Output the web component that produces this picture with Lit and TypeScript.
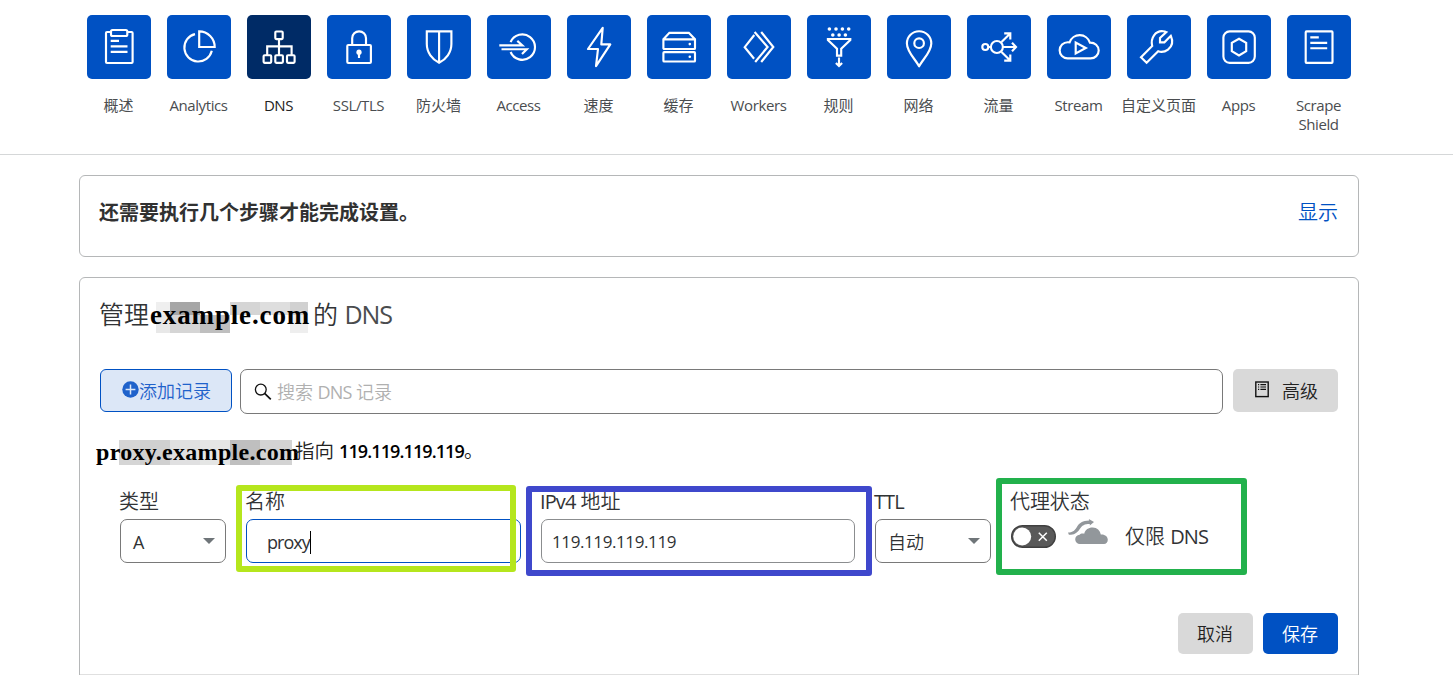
import { LitElement, html, css, svg } from "lit";
import { customElement } from "lit/decorators.js";
import { classMap } from "lit/directives/class-map.js";

const glyphs: Record<string, unknown> = {
  overview: svg`<rect x="19" y="17" width="26.6" height="31" rx="1"/><rect class="knock" x="24" y="15" width="16.3" height="6" rx="1.5"/><path d="M23.7 25.8H32M23.7 31.3H40.5M23.7 36.8H40.5"/>`,
  analytics: svg`<path d="M28 19.1A13.9 13.9 0 1 0 44.8 35.8"/><path d="M32.2 16.4V32H47.7A15.6 15.6 0 0 0 32.2 16.4Z"/>`,
  dns: svg`<rect x="28.3" y="16.5" width="7.4" height="7.6" rx="1"/><path d="M32 24.3V40M20.2 40V31.3H44.6V40"/><rect x="16.6" y="40.2" width="7.6" height="7.6" rx="1"/><rect x="28.3" y="40.2" width="7.6" height="7.6" rx="1"/><rect x="40" y="40.2" width="7.6" height="7.6" rx="1"/>`,
  ssl: svg`<rect x="20.3" y="30" width="23.6" height="18" rx="1"/><path d="M25.2 30V23.2a6.9 6.9 0 0 1 13.8 0V30"/><circle class="solid" cx="32" cy="37.2" r="2.6"/><path d="M32 38V43"/>`,
  firewall: svg`<path d="M19.8 16.4H44.4V29C44.4 37.5 39 44.5 32.1 47.7C25.2 44.5 19.8 37.5 19.8 29ZM32.1 16.4V47"/>`,
  access: svg`<path d="M23.6 27.2A12.7 12.7 0 1 1 23.6 37"/><path d="M12.3 30.3H35.3L30.3 25.9M14.5 34.2H39.8L35 39"/>`,
  speed: svg`<path d="M35.7 12.8L21 34H31L29 51.2L43.3 29.4H34.3Z" stroke-linejoin="round"/>`,
  cache: svg`<path d="M16.4 24.2L22.4 17.8H41.8L48 24.2V33.2a.8 .8 0 0 1-.8 .8H17.2a.8 .8 0 0 1-.8-.8ZM16.4 24.4H48"/><rect x="16.4" y="37.1" width="31.6" height="9.4" rx=".8"/><circle class="solid" cx="42.8" cy="29.1" r="1.3"/><circle class="solid" cx="42.8" cy="41.7" r="1.3"/>`,
  workers: svg`<path d="M27.3 20L17.7 32.2L27.1 43.8M27.6 17L40.6 32L28.2 47M34.2 17L46.3 32L34.2 47"/>`,
  rules: svg`<g class="solid"><circle cx="22.4" cy="14" r="1.8"/><circle cx="29" cy="14" r="1.8"/><circle cx="35.4" cy="14" r="1.8"/><circle cx="41.7" cy="14" r="1.8"/><circle cx="25.8" cy="20" r="1.8"/><circle cx="32.1" cy="20" r="1.8"/><circle cx="38.4" cy="20" r="1.8"/></g><path d="M20.9 24H43.3V25L34.2 33.8V40.6H30V33.8L20.9 25ZM32 42.6V50.8M28.9 48L32 51L35.1 48"/>`,
  network: svg`<path d="M32.1 51.3C29 45 19.9 37 19.9 28.4A12.2 12.2 0 0 1 44.3 28.4C44.3 37 35.2 45 32.1 51.3Z" stroke-linejoin="round"/><circle cx="32.1" cy="28.2" r="4.8"/>`,
  traffic: svg`<circle cx="18.3" cy="32" r="3"/><circle cx="29.9" cy="32" r="6"/><path d="M21.3 32H24M34.5 27L43.2 18.4M37.2 18.4H43.3V24.6M36 32H48.5M45 27.8L49 32L45 36.2M34.5 37L43.2 45.6M37.2 45.6H43.3V39.4"/>`,
  stream: svg`<path d="M20.6 43.4A8 8 0 0 1 20.8 27.3H22.6A10.7 10.7 0 0 1 42.9 27.6C47.8 27.4 51.7 31 51.7 35.6C51.7 40 48 43.4 43.6 43.4Z"/><path d="M28.7 27.6V38.5L38.8 33Z"/>`,
  custom: svg`<path d="M14 42.3L25.2 31C23.2 23 28.5 15.5 36 16.2C37.4 16.3 38.6 16.7 39.4 17.1L33 23V27.3H37.4L43.8 20.8C46.3 26.5 45 31.6 41 34.6C38 36.8 34 37.3 31.2 36.3L19.6 47.8Z"/>`,
  apps: svg`<rect x="16.4" y="16.4" width="31.4" height="31.4" rx="6.2"/><path d="M32 23.7L39.2 27.8V36.2L32 40.4L24.8 36.2V27.8Z"/>`,
  scrape: svg`<rect x="18.7" y="16.4" width="26.8" height="31.4" rx=".8"/><path d="M23.3 22.4H31.8M23.3 27.8H40.2M23.3 33.2H40.2"/>`,
};

const sections: [string, string][] = [
  ["overview", "概述"],
  ["analytics", "Analytics"],
  ["dns", "DNS"],
  ["ssl", "SSL/TLS"],
  ["firewall", "防火墙"],
  ["access", "Access"],
  ["speed", "速度"],
  ["cache", "缓存"],
  ["workers", "Workers"],
  ["rules", "规则"],
  ["network", "网络"],
  ["traffic", "流量"],
  ["stream", "Stream"],
  ["custom", "自定义页面"],
  ["apps", "Apps"],
  ["scrape", "Scrape Shield"],
];

@customElement("zone-nav")
class ZoneNav extends LitElement {
  static styles = css`
    :host { display: block; height: 154px; border-bottom: 1px solid #d5d7d8; }
    .items { display: flex; width: 1280px; margin-left: 79px; padding-top: 15px; }
    .item { width: 80px; display: flex; flex-direction: column; align-items: center; }
    .tile { width: 64px; height: 64px; border-radius: 5px; background: #0051c3; }
    .tile.active { background: #002b66; }
    .tile svg { display: block; fill: none; stroke: #fff; stroke-width: 2.15; }
    .tile .solid { fill: #fff; stroke: none; }
    .tile .knock { fill: #0051c3; }
    .label { margin: 17px 1px 0 0; font-size: 15px; line-height: 19px; color: #4a4d50; text-align: center; white-space: nowrap; }
    .label.latin { letter-spacing: -0.4px; }
    .label.wrap { white-space: normal; width: 60px; }
    .label.active { color: #222; }
  `;
  render() {
    return html`<nav class="items">
      ${sections.map(([id, name]) => {
        const active = id === "dns";
        const latin = /^[A-Z]/.test(name);
        return html`<a class="item">
          <div class=${classMap({ tile: true, active })}><svg width="64" height="64" viewBox="0 0 64 64">${glyphs[id]}</svg></div>
          <div class=${classMap({ label: true, latin, active, wrap: id === "scrape" })}>${name}</div>
        </a>`;
      })}
    </nav>`;
  }
}

@customElement("app-root")
class AppRoot extends LitElement {
  static styles = css`
    :host {
      display: block; position: relative; width: 1453px; height: 675px; overflow: hidden; background: #fff;
      font-family: "Open Sans", "Noto Sans CJK SC", sans-serif; color: #313335;
    }
    * { box-sizing: border-box; }
    zone-nav { box-sizing: content-box; }
    .latin { font-weight: 400; letter-spacing: -0.045em; }
    .main { width: 1280px; margin: 20px 0 0 79px; display: flex; flex-direction: column; gap: 20px; }
    .card { border: 1px solid #b5b7b8; border-radius: 6px; }
    .setup { height: 82px; padding: 22px 20px 0 19px; display: flex; justify-content: space-between; font-size: 20px; line-height: 30px; }
    .setup b { font-weight: 700; color: #313131; }
    .link { color: #0051c3; font-weight: 350; }
    .manage { height: 420px; padding: 18px 20px 0 19px; }
    .title { display: flex; align-items: center; height: 36px; font-size: 25px; line-height: 36px; font-weight: 350; white-space: nowrap; }
    .title .latin { color: #4a4c4e; }
    .zone { font: bold 27px/27px "Liberation Serif", serif; color: #000; }
    .zone.big {
      width: 163px; height: 31px; letter-spacing: 0.85px; margin: 6px 0 0 1px;
      background:
        linear-gradient(90deg, #efefef 14px, #a6a6a6 14px 44px, #fff 44px 74px, #d5d5d5 74px 104px, #dedede 104px 134px, #d1d1d1 134px) 6px 0 / 152px 13px no-repeat,
        linear-gradient(90deg, #e8e8e8 14px, #d5d5d5 14px 44px, #bfbfbf 44px 74px, #fff 74px 134px, #eee 134px) 6px 13px / 152px 18px no-repeat;
    }
    .tools { display: flex; margin: 37px 0 0 1px; }
    .btn { display: flex; align-items: center; justify-content: center; border-radius: 5px; padding-bottom: 2px; font-size: 18px; background: #d9d9d9; font-weight: 350; color: #222; }
    .add { width: 132px; height: 43px; padding-left: 1px; border: 1px solid #0051c3; border-radius: 6px; background: #dce7f7; color: #1f62cb; }
    .search { margin-left: 8px; width: 983px; height: 45px; border: 1px solid #797979; border-radius: 7px; display: flex; align-items: center; padding: 0 0 1px 13px; gap: 5px; font-size: 18px; font-weight: 350; color: #b0b0b0; }
    .search svg { margin-top: 2px; }
    .search span { letter-spacing: -0.1px; }
    .search .latin { letter-spacing: -0.045em; }
    .advanced { margin-left: 10px; width: 105px; height: 43px; gap: 13px; padding-left: 2px; }
    .summary { display: flex; align-items: center; margin: 19px 0 0 -3px; height: 32px; font-size: 19.5px; font-weight: 350; color: #222; white-space: pre; }
    .summary b { font-size: 18px; font-weight: 600; color: #000; letter-spacing: -0.9px; }
    .zone.small {
      width: 199px; font-size: 24px; line-height: 24px; height: 25px; letter-spacing: 0.3px; margin-top: 6px;
      background: linear-gradient(90deg, #d5d5d5 21px, #d0d0d0 21px 51px, #e0e0e1 51px 81px, #e5e6e5 81px 111px, #bfbfbf 111px 141px, #d3d3d3 141px) 23px 0 / 173px 25px no-repeat;
    }
    .form { display: flex; margin: 23px 0 0 21px; }
    .field { margin-right: 20px; }
    .caption { font-size: 20px; line-height: 28px; height: 31px; margin-left: -1px; font-weight: 350; letter-spacing: -0.1px; white-space: nowrap; }
    .box { height: 44px; border: 1px solid #797979; border-radius: 7px; display: flex; align-items: center; font-size: 18px; color: #303234; padding: 2px 11px 0 12px; }
    .select { justify-content: space-between; }
    .arrow { width: 0; border: 6px solid transparent; border-top-color: #6f7579; border-bottom: 0; margin: -3px -1px 0 0; }
    .type { width: 106px; }
    .name { width: 275px; border-color: #0051c3; padding-left: 20px; }
    .name span { letter-spacing: -0.95px; }
    .caret { width: 1px; height: 23px; background: #000; }
    .ip { width: 314px; padding: 0 0 0 10px; border-color: #8b8d8f; font-size: 17px; letter-spacing: -0.4px; }
    .ttl { width: 116px; font-weight: 350; padding: 0 11px 0 12px; }
    .ttl .arrow { margin-top: -1px; }
    .status { display: flex; align-items: center; font-size: 20px; font-weight: 350; height: 34px; }
    .status svg { display: block; }
    .status span { margin-top: -1px; }
    .cloud { margin: -8px 17px 0 12px; }
    .actions { display: flex; justify-content: flex-end; gap: 10px; margin-top: 50px; }
    .actions .btn { width: 75px; height: 41px; padding-right: 1px; }
    .actions .save { background: #0051c3; color: #fff; }
    .divider { height: 1px; margin: 20px -20px 0 -19px; background: #e0e0e0; }
    .mark { position: absolute; border: 6px solid; border-radius: 3px; }
    .lime { left: 236px; top: 485px; width: 280px; height: 87px; border-color: #b5e61d; }
    .indigo { left: 526px; top: 486px; width: 346px; height: 90px; border-color: #3f48cc; }
    .green { left: 996px; top: 478px; width: 251px; height: 97px; border-color: #22b14c; }
  `;
  render() {
    return html`
      <zone-nav></zone-nav>
      <main class="main">
        <section class="card setup"><b>还需要执行几个步骤才能完成设置。</b><a class="link">显示</a></section>
        <section class="card manage">
          <div class="title"><span>管理</span><span class="zone big">example.com</span><span>的 <span class="latin">DNS</span></span></div>
          <div class="tools">
            <div class="btn add">
              <svg width="17" height="17" viewBox="0 0 17 17"><circle cx="8.5" cy="8.5" r="8.2" fill="#1f62cb"/><path d="M8.5 3.6V13.4M3.6 8.5H13.4" stroke="#dce7f7" stroke-width="1.5"/></svg>
              <span>添加记录</span>
            </div>
            <div class="search">
              <svg width="18" height="18" viewBox="0 0 18 18" fill="none" stroke="#111"><circle cx="6.8" cy="6.6" r="5.4" stroke-width="1.3"/><path d="M10.6 10.3L16.8 16.3" stroke-width="1.7"/></svg>
              <span>搜索 <span class="latin">DNS</span> 记录</span>
            </div>
            <div class="btn advanced">
              <svg width="14" height="17" viewBox="0 0 14 17" fill="none" stroke="#111"><rect x=".8" y="1" width="12.4" height="14.6" stroke-width="1.4"/><path d="M3 3.6H4.2M5.4 3.6H11M3 6H4.2M5.4 6H11M3 8.4H4.2M5.4 8.4H11" stroke-width="1.2"/></svg>
              <span>高级</span>
            </div>
          </div>
          <div class="summary"><span class="zone small">proxy.example.com</span><span>指向 <b>119.119.119.119</b>。</span></div>
          <div class="form">
            <div class="field"><div class="caption">类型</div><div class="box select type"><span>A</span><i class="arrow"></i></div></div>
            <div class="field"><div class="caption">名称</div><div class="box name"><span>proxy</span><i class="caret"></i></div></div>
            <div class="field"><div class="caption"><span class="latin">IPv4</span> 地址</div><div class="box ip"><span>119.119.119.119</span></div></div>
            <div class="field"><div class="caption"><span class="latin">TTL</span></div><div class="box select ttl"><span>自动</span><i class="arrow"></i></div></div>
            <div class="field"><div class="caption">代理状态</div>
              <div class="status">
                <svg width="45" height="23" viewBox="0 0 45 23"><rect x=".7" y=".7" width="43.6" height="21.6" rx="10.8" fill="#595959" stroke="#404040" stroke-width="1.4"/><circle cx="11.2" cy="11.5" r="9" fill="#fff"/><path d="M27.8 7.8L35.8 15.8M35.8 7.8L27.8 15.8" stroke="#fff" stroke-width="1.5"/></svg>
                <svg class="cloud" width="40" height="26" viewBox="0 0 40 26" fill="#92979b"><path d="M12 25A4.6 4.6 0 0 1 11.6 15.8C12.3 14.7 14.2 14.3 16.2 14.7C17.2 10.4 21 8.2 24.8 8.4C29 8.6 32.2 11.4 32.8 15.6C36.8 15.2 39.8 17.6 39.8 20.8C39.8 23.4 38.2 25 36 25Z"/><path d="M0 13.4C4.4 13.4 6.2 12 8.6 8.4C11.4 3.8 14.6 2 21.2 1.6L20.8 0L26 3L21.8 6.4V4.9C16.4 4.9 14.2 6.2 11.6 10.2C8.8 14.4 5.8 15.9 .9 15.8Z"/></svg>
                <span>仅限 <span class="latin">DNS</span></span>
              </div>
            </div>
          </div>
          <div class="actions"><div class="btn">取消</div><div class="btn save">保存</div></div>
          <div class="divider"></div>
        </section>
      </main>
      <div class="mark lime"></div><div class="mark indigo"></div><div class="mark green"></div>
    `;
  }
}
